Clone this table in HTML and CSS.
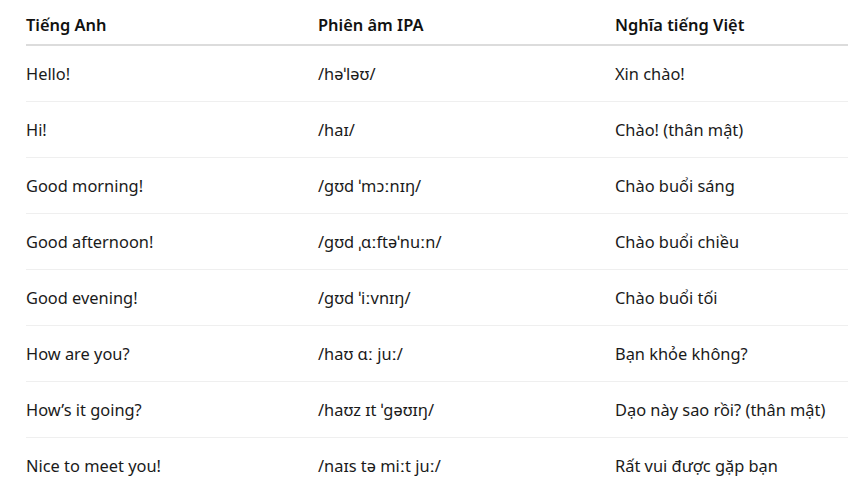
FILE: index.html
```html
<!DOCTYPE html>
<html lang="vi">
<head>
<meta charset="utf-8">
<link rel="stylesheet" href="styles.css">
</head>
<body>
<table class="vocab">
  <thead>
    <tr><th>Tiếng Anh</th><th>Phiên âm IPA</th><th>Nghĩa tiếng Việt</th></tr>
  </thead>
  <tbody>
    <tr><td>Hello!</td><td>/həˈləʊ/</td><td>Xin chào!</td></tr>
    <tr><td>Hi!</td><td>/haɪ/</td><td>Chào! (thân mật)</td></tr>
    <tr><td>Good morning!</td><td>/ɡʊd ˈmɔːnɪŋ/</td><td>Chào buổi sáng</td></tr>
    <tr><td>Good afternoon!</td><td>/ɡʊd ˌɑːftəˈnuːn/</td><td>Chào buổi chiều</td></tr>
    <tr><td>Good evening!</td><td>/ɡʊd ˈiːvnɪŋ/</td><td>Chào buổi tối</td></tr>
    <tr><td>How are you?</td><td>/haʊ ɑː juː/</td><td>Bạn khỏe không?</td></tr>
    <tr><td>How’s it going?</td><td>/haʊz ɪt ˈɡəʊɪŋ/</td><td>Dạo này sao rồi? (thân mật)</td></tr>
    <tr><td>Nice to meet you!</td><td>/naɪs tə miːt juː/</td><td>Rất vui được gặp bạn</td></tr>
  </tbody>
</table>
</body>
</html>
```
FILE: styles.css
```css
html, body { margin: 0; padding: 0; background: #fff; }
body { padding: 0 0 0 26px; overflow: hidden; font-family: "Noto Sans", "Open Sans", sans-serif; font-size: 16.4px; color: #1a1a1a; }
.vocab { border-collapse: collapse; width: 860px; table-layout: fixed; }
.vocab th, .vocab td { text-align: left; padding: 0; vertical-align: middle; }
.vocab th:nth-child(1) { width: 292px; }
.vocab th:nth-child(2) { width: 297px; }
.vocab th { font-weight: 600; color: #111; height: 45px; line-height: 24px; padding-top: 6px; border-bottom: 2px solid #dcdcdc; box-sizing: border-box; }
.vocab td { height: 55px; line-height: 24px; border-bottom: 1px solid #efefef; }
```
